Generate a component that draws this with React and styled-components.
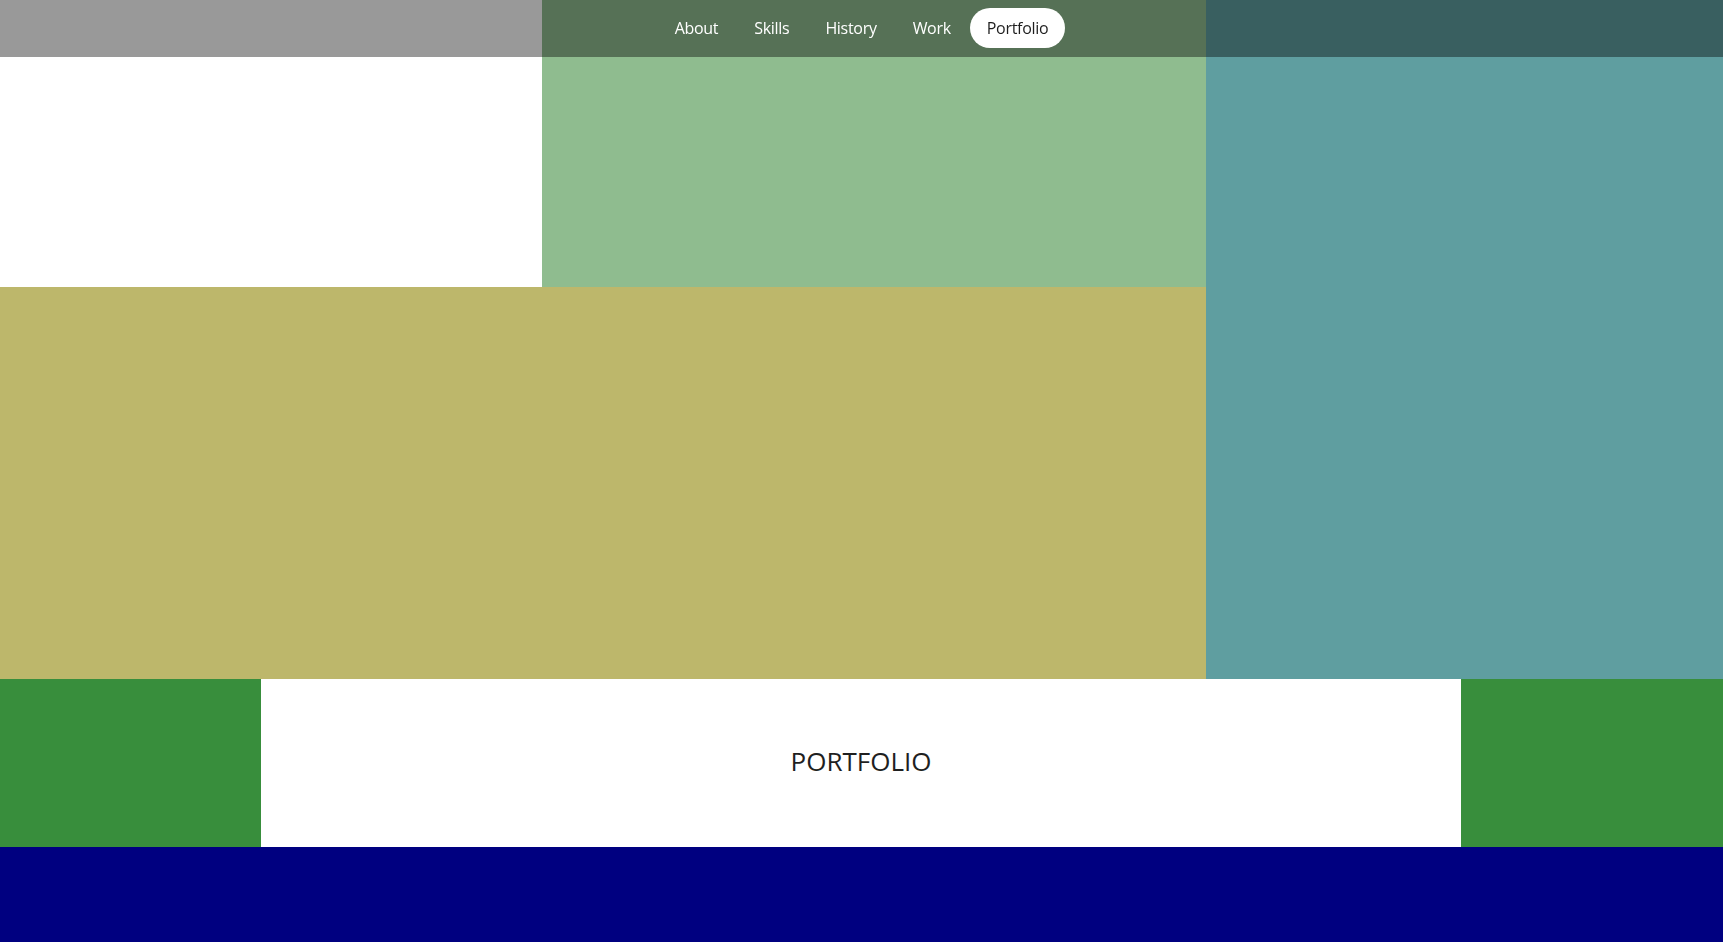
import React from 'react';
import styled, { createGlobalStyle } from 'styled-components';

const GlobalStyle = createGlobalStyle`
  html, body {
    margin: 0;
    padding: 0;
    font-family: "Open Sans", Lato, sans-serif;
  }
  * {
    box-sizing: border-box;
  }
`;

const Nav = styled.nav`
  position: fixed;
  top: 0;
  left: 0;
  right: 0;
  height: 57px;
  padding-bottom: 2px;
  background-color: rgba(0, 0, 0, 0.4);
  display: flex;
  justify-content: center;
  align-items: center;
  gap: 2px;
  z-index: 10;
`;

const NavLink = styled.a`
  font-size: 16px;
  letter-spacing: -0.3px;
  padding: 0 17px;
  height: 40px;
  display: flex;
  align-items: center;
  border-radius: 20px;
  text-decoration: none;
  cursor: pointer;
  color: ${(p) => (p.active ? '#1e1e1e' : '#ffffff')};
  background-color: ${(p) => (p.active ? '#ffffff' : 'transparent')};
`;

const Hero = styled.section`
  display: grid;
  grid-template-columns: 542px 664px 1fr;
  grid-template-rows: 287px 392px;
`;

const Block = styled.div`
  background-color: ${(p) => p.color};
  grid-column: ${(p) => p.col || 'auto'};
  grid-row: ${(p) => p.row || 'auto'};
`;

const TitleRow = styled.section`
  display: grid;
  grid-template-columns: 261px 1fr 262px;
  height: 168px;
`;

const Side = styled.div`
  background-color: #388e3c;
`;

const Title = styled.h2`
  margin: 0;
  padding-bottom: 4px;
  background-color: #ffffff;
  display: flex;
  justify-content: center;
  align-items: center;
  font-family: "Open Sans", sans-serif;
  font-weight: 400;
  font-size: 26px;
  color: #1f1f1f;
`;

const Footer = styled.section`
  background-color: #000080;
  height: 240px;
`;

const links = ['About', 'Skills', 'History', 'Work', 'Portfolio'];

const App = () => (
  <>
    <GlobalStyle />
    <Nav>
      {links.map((l) => (
        <NavLink key={l} active={l === 'Portfolio' ? 1 : 0}>
          {l}
        </NavLink>
      ))}
    </Nav>
    <Hero>
      <Block color="#ffffff" col="1" row="1" />
      <Block color="#8fbc8f" col="2" row="1" />
      <Block color="#5f9ea0" col="3" row="1 / span 2" />
      <Block color="#bdb76b" col="1 / span 2" row="2" />
    </Hero>
    <TitleRow>
      <Side />
      <Title>PORTFOLIO</Title>
      <Side />
    </TitleRow>
    <Footer />
  </>
);

export default App;
